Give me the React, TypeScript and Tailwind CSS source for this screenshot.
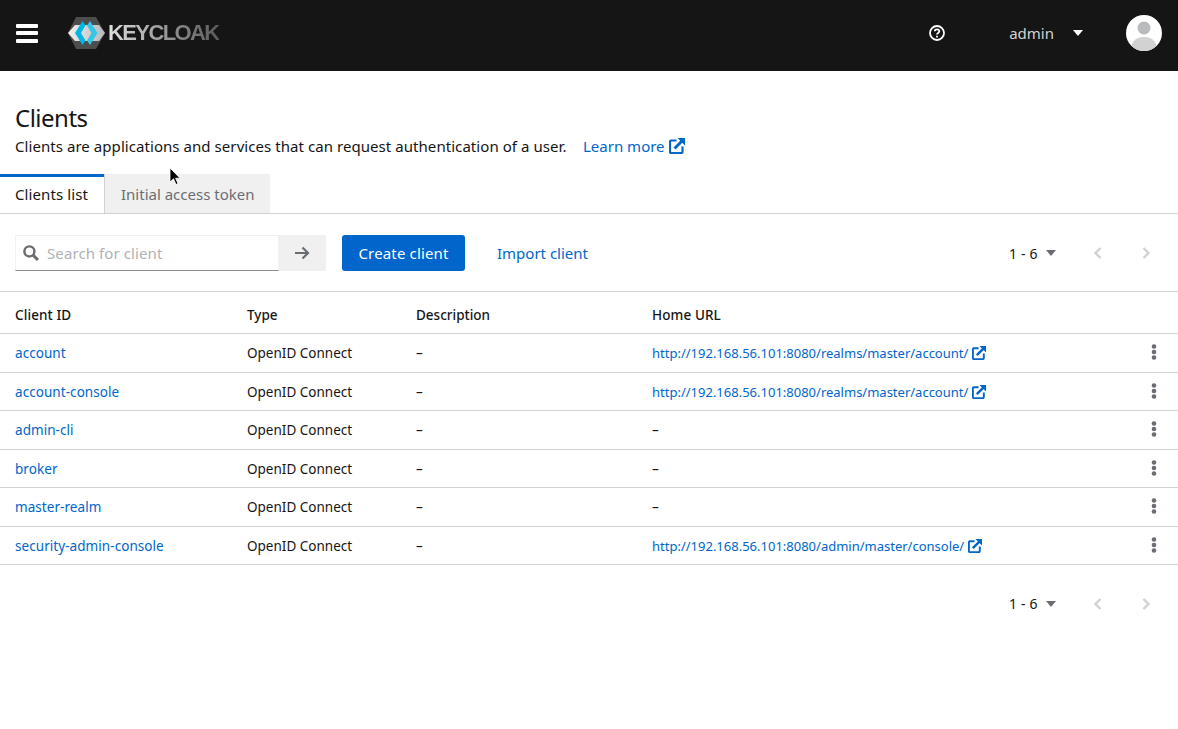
import React from "react";

const Ext = ({ s = 16 }: { s?: number }) => (
  <svg width={s} height={s} viewBox="0 0 16 16" className="inline-block shrink-0" fill="none" stroke="#0066cc">
    <path d="M7.500 2.500H2.200C1.500 2.500 1 3 1 3.700v10.100c0 .7.500 1.200 1.200 1.200h10.100c.7 0 1.200-.5 1.200-1.200V8.500" strokeWidth="2.200" />
    <path d="M5.500 10.500 13 3" strokeWidth="2.800" />
    <path d="M8.500 0h7.500v7.500z" fill="#0066cc" stroke="none" />
  </svg>
);

const Caret = ({ c = "#6a6e73" }: { c?: string }) => (
  <svg width="10" height="6" viewBox="0 0 10 6"><path d="M0 0h10L5 6z" fill={c} /></svg>
);

const Chevron = ({ right }: { right?: boolean }) => (
  <svg width="8" height="12" viewBox="0 0 8 12" fill="none" stroke="#d2d2d2" strokeWidth="2.400">
    <path d={right ? "M1.500 1l5 5-5 5" : "M6.500 1l-5 5 5 5"} />
  </svg>
);

const Pager = () => (
  <div className="flex items-center pt-[1px]">
    <span className="text-[14px] text-[#151515] w-[37px] tracking-[0.2px] whitespace-nowrap">1 - 6</span>
    <Caret />
    <div className="w-[38px]" />
    <Chevron />
    <div className="w-[40px]" />
    <Chevron right />
  </div>
);

const rows = [
  ["account", "http://192.168.56.101:8080/realms/master/account/"],
  ["account-console", "http://192.168.56.101:8080/realms/master/account/"],
  ["admin-cli", ""],
  ["broker", ""],
  ["master-realm", ""],
  ["security-admin-console", "http://192.168.56.101:8080/admin/master/console/"],
];

const Kebab = () => (
  <svg width="6" height="16" viewBox="0 0 6 16" fill="#6a6e73">
    <circle cx="3" cy="2.500" r="2.300" /><circle cx="3" cy="8" r="2.300" /><circle cx="3" cy="13.500" r="2.300" />
  </svg>
);

export default function App() {
  return (
    <div className="relative w-[1178px] h-[729px] bg-white overflow-hidden font-['Noto_Sans','Open_Sans',sans-serif] text-[#151515]">
      <header className="h-[71px] bg-[#151515] flex items-center pb-[5px]">
        <div className="ml-[16px] w-[22px] flex flex-col gap-[3.5px]">
          <div className="h-[4px] bg-white rounded-[1px]" />
          <div className="h-[4px] bg-white rounded-[1px]" />
          <div className="h-[4px] bg-white rounded-[1px]" />
        </div>
        <div className="ml-[30px] flex items-center w-[152px]">
          <svg width="38" height="32" viewBox="0 0 38 32" className="shrink-0">
            <defs>
              <linearGradient id="lg" x1="0" x2="1" y1="0" y2="0">
                <stop offset="0" stopColor="#f0f0f0" /><stop offset="1" stopColor="#b8b8b8" />
              </linearGradient>
            </defs>
            <path d="M8 0h20l9 16-9 16H8L0 16z" fill="#4d4d4d" />
            <path d="M0 16 7 8h24l6 8-6 8H7z" fill="url(#lg)" />
            <path d="M14.500 4 7 16l7.500 12 3-4.500L13 16l4.500-7.500z" fill="#00b8e3" />
            <path d="M22 4l7.500 12L22 28l-3-4.500 4.500-7.500L19 8.500z" fill="#33c6e9" />
          </svg>
          <span className="ml-[2px] text-[22px] leading-none font-bold tracking-[-1.6px] text-transparent bg-clip-text bg-gradient-to-r from-[#e0e0e0] to-[#5a5a5a] font-['Liberation_Sans',sans-serif]">KEYCLOAK</span>
        </div>
        <div className="ml-auto flex items-center">
          <svg width="16" height="16" viewBox="0 0 16 16" fill="none" stroke="#fff" strokeWidth="1.800">
            <circle cx="8" cy="8" r="7" />
            <path d="M5.700 6.300C5.800 5 6.800 4.300 8 4.300c1.300 0 2.300.8 2.300 2 0 1.700-2.300 1.600-2.300 3.200" />
            <path d="M8 10.700v1.800" />
          </svg>
          <span className="ml-[64px] text-[15px] text-[#d2d2d2]">admin</span>
          <div className="ml-[19px]"><Caret c="#ffffff" /></div>
          <svg width="36" height="36" viewBox="0 0 36 36" className="ml-[43px] mr-[16px]">
            <defs><clipPath id="av"><circle cx="18" cy="18" r="18" /></clipPath></defs>
            <circle cx="18" cy="18" r="18" fill="#fff" />
            <g clipPath="url(#av)">
              <circle cx="18" cy="13" r="6.500" fill="#b8bbbe" />
              <path d="M5 36c0-10 5-14 13-14s13 4 13 14z" fill="#d2d2d2" />
            </g>
          </svg>
        </div>
      </header>

      <section className="pl-[15px] pt-[32px] h-[103px]">
        <h1 className="text-[24px] leading-[29px] tracking-[-0.5px]">Clients</h1>
        <p className="mt-[3px] text-[15px] leading-[22px] flex items-center">
          <span className="w-[568px] whitespace-nowrap tracking-[0.06px]">Clients are applications and services that can request authentication of a user.</span>
          <span className="text-[#0066cc] flex items-center gap-[4px]">Learn more <Ext /></span>
        </p>
      </section>

      <nav className="flex h-[40px] border-b border-[#d2d2d2] text-[15px]">
        <div className="w-[104px] pl-[15px] border-t-[3px] border-[#0066cc] flex items-center pb-[1px] text-[#151515] tracking-[0.1px]">Clients list</div>
        <div className="w-[166px] bg-[#f0f0f0] border-l border-[#d2d2d2] pl-[16px] pt-[2px] flex items-center text-[#6a6e73]">Initial access token</div>
      </nav>

      <div className="h-[77px] pl-[15px] flex items-center">
        <div className="w-[264px] h-[36px] border border-[#f0f0f0] border-b-[#8a8d90] flex items-center pl-[7px] gap-[8px]">
          <svg width="16" height="16" viewBox="0 0 15 15" fill="none" stroke="#6a6e73" strokeWidth="2.300">
            <circle cx="6" cy="6" r="4.700" /><path d="M9.500 9.500 14 14" strokeWidth="2.800" />
          </svg>
          <span className="text-[15px] text-[#b0b2b5] tracking-[0.1px] pt-[2px]">Search for client</span>
        </div>
        <div className="w-[47px] h-[36px] bg-[#f0f0f0] flex items-center justify-center pr-[2px]">
          <svg width="16" height="14" viewBox="0 0 16 14" fill="none" stroke="#6a6e73" strokeWidth="2.200">
            <path d="M1 7h13M8.500 1.500 14 7l-5.500 5.500" />
          </svg>
        </div>
        <div className="ml-[16px] w-[123px] h-[36px] rounded-[3px] bg-[#0066cc] text-white text-[15px] tracking-[0.15px] pt-[2px] flex items-center justify-center">Create client</div>
        <div className="ml-[32px] text-[15px] text-[#0066cc] pt-[2px]">Import client</div>
        <div className="ml-auto mr-[28px]"><Pager /></div>
      </div>

      <div className="border-t border-[#d2d2d2] text-[13.5px]">
        <div className="h-[42px] flex items-center border-b border-[#d2d2d2] font-medium pl-[15px] pt-[5px]">
          <div className="w-[232px] tracking-[0.1px]">Client ID</div>
          <div className="w-[169px]">Type</div>
          <div className="w-[236px]">Description</div>
          <div className="tracking-[0.1px]">Home URL</div>
        </div>
        {rows.map(([id, url]) => (
          <div key={id} className="h-[38.5px] flex items-center border-b border-[#d2d2d2] pl-[15px] pt-[1px]">
            <div className="w-[232px] text-[#0066cc] tracking-[0.06px]">{id}</div>
            <div className="w-[169px]">OpenID Connect</div>
            <div className="w-[236px]">–</div>
            <div className="flex-1 flex items-center gap-[4px]">
              {url ? (<><span className="text-[#0066cc] text-[13px] whitespace-nowrap pt-[1px]">{url}</span><Ext s={14} /></>) : "–"}
            </div>
            <div className="w-[6px] mr-[21px] flex -mt-[2px]"><Kebab /></div>
          </div>
        ))}
      </div>

      <div className="mt-[27px] flex justify-end mr-[28px]"><Pager /></div>

      <svg width="12" height="19" viewBox="0 0 12 19" className="absolute left-[169px] top-[167px]">
        <path d="M1 1v14l3.500-3.200L7 17.500l2-1-2.400-5.300H11z" fill="#000" stroke="#fff" strokeWidth="0.800" />
      </svg>
    </div>
  );
}
